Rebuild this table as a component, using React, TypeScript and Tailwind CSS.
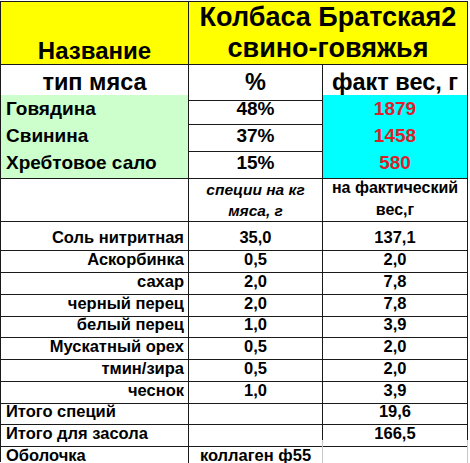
import React from "react";

const font = { fontFamily: '"Liberation Sans", Arial, sans-serif' };

const spices = [
  { name: "Соль нитритная", perKg: "35,0", fact: "137,1", h: "h-[22px]" },
  { name: "Аскорбинка", perKg: "0,5", fact: "2,0", h: "h-[22px]" },
  { name: "сахар", perKg: "2,0", fact: "7,8", h: "h-[22px]" },
  { name: "черный перец", perKg: "2,0", fact: "7,8", h: "h-[21px]" },
  { name: "белый перец", perKg: "1,0", fact: "3,9", h: "h-[22px]" },
  { name: "Мускатный орех", perKg: "0,5", fact: "2,0", h: "h-[22px]" },
  { name: "тмин/зира", perKg: "0,5", fact: "2,0", h: "h-[22px]" },
  { name: "чеснок", perKg: "1,0", fact: "3,9", h: "h-[21px]" },
];

const meats = [
  { name: "Говядина", pct: "48%", fact: "1879", h: "h-[27px]" },
  { name: "Свинина", pct: "37%", fact: "1458", h: "h-[27px]" },
  { name: "Хребтовое сало", pct: "15%", fact: "580", h: "h-[26px]" },
];

const row = "grid grid-cols-[188px_134px_145px]";
const cell = "border-r border-b border-[#1a1a1a] flex items-center";

export default function App() {
  return (
    <div className="w-[470px] h-[463px] bg-white overflow-hidden" style={font}>
      <div className="mt-[1px] w-[468px] border-l border-t border-[#1a1a1a] text-black font-bold">
        {/* шапка */}
        <div className={`${row} h-[61px]`}>
          <div className={`${cell} bg-[#ffff00] justify-center items-end text-[24px] leading-[27px]`}>Название</div>
          <div className={`${cell} col-span-2 bg-[#ffff00] flex-col justify-start text-[27px] leading-[31px] text-center`}>
            <span>Колбаса Братская2</span>
            <span>свино-говяжья</span>
          </div>
        </div>
        <div className={`${row} h-[32px] text-[23.5px] pt-[2px]`}>
          <div className={`${cell} justify-center`}>тип мяса</div>
          <div className={`${cell} justify-center`}>%</div>
          <div className={`${cell} justify-center`}>факт вес, г</div>
        </div>

        {meats.map((m) => (
          <div key={m.name} className={`${row} ${m.h} text-[19px]`}>
            <div className={`${cell} bg-[#ccffcc] pl-[5px]`}>{m.name}</div>
            <div className={`${cell} justify-center`}>{m.pct}</div>
            <div className={`${cell} bg-[#00ffff] justify-center text-[#dc1f2a]`}>{m.fact}</div>
          </div>
        ))}

        <div className={`${row} h-[47px]`}>
          <div className={cell}></div>
          <div className={`${cell} flex-col justify-end text-center italic text-[15.5px] leading-[21px]`}>
            <span>специи на кг</span>
            <span>мяса, г</span>
          </div>
          <div className={`${cell} flex-col justify-end text-center text-[16px] leading-[22px]`}>
            <span>на фактический</span>
            <span>вес,г</span>
          </div>
        </div>

        {spices.map((s) => (
          <div key={s.name} className={`${row} ${s.h} text-[16.5px]`}>
            <div className={`${cell} justify-end pr-[4px] pt-[3px]`}>{s.name}</div>
            <div className={`${cell} justify-center pt-[3px]`}>{s.perKg}</div>
            <div className={`${cell} justify-center pt-[3px]`}>{s.fact}</div>
          </div>
        ))}

        <div className={`${row} h-[22px] text-[16.5px]`}>
          <div className={`${cell} pl-[5px] pt-[3px]`}>Итого специй</div>
          <div className={cell}></div>
          <div className={`${cell} justify-center pt-[3px]`}>19,6</div>
        </div>
        <div className={`${row} h-[22px] text-[16.5px]`}>
          <div className={`${cell} pl-[5px] pt-[3px]`}>Итого для засола</div>
          <div className={cell}></div>
          <div className={`${cell} justify-center pt-[3px]`}>166,5</div>
        </div>
        <div className={`${row} h-[22px] text-[16.5px]`}>
          <div className={`${cell} pl-[5px] pt-[3px]`}>Оболочка</div>
          <div className="border-r border-b border-r-[#c8c8c8] border-b-[#1a1a1a] flex items-center justify-center pt-[3px]">коллаген ф55</div>
          <div className="border-r border-b border-r-[#c8c8c8] border-b-[#1a1a1a]"></div>
        </div>
      </div>
    </div>
  );
}
